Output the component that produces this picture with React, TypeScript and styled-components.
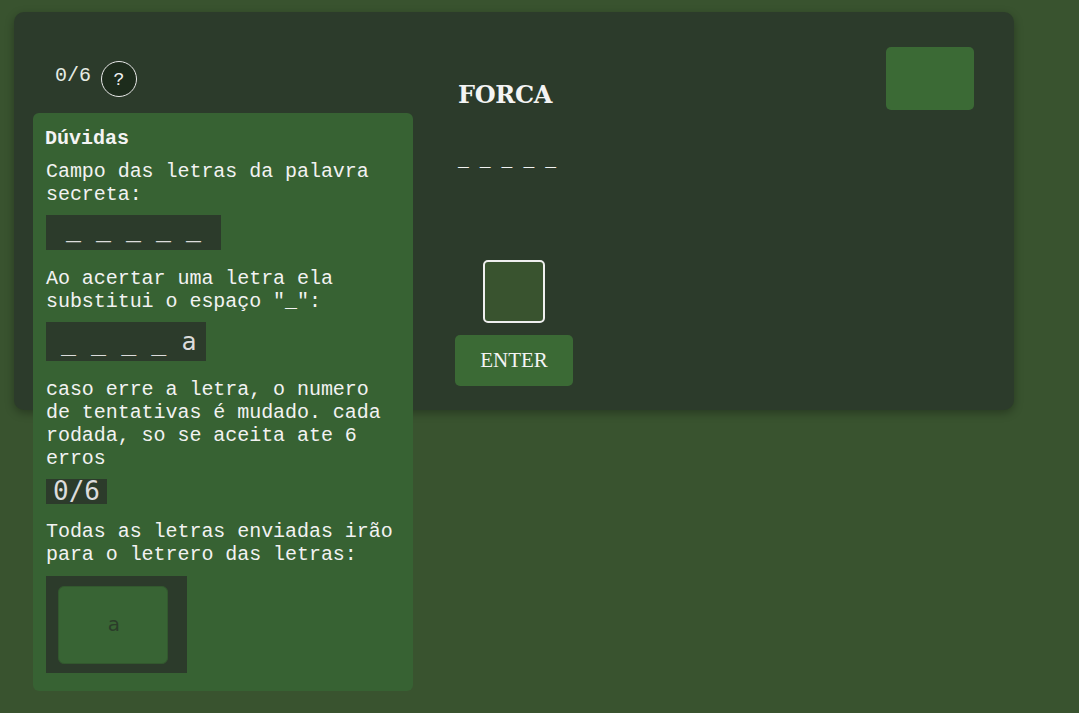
import React from "react";
import styled, { createGlobalStyle } from "styled-components";

const Global = createGlobalStyle`
  html, body { margin: 0; padding: 0; }
  body {
    background: #39532f;
    font-family: "Liberation Mono", "Courier New", monospace;
    color: #f2f2f2;
    min-height: 713px;
  }
`;

const Page = styled.div`
  padding: 12px 0 0 14px;
`;

const Card = styled.main`
  position: relative;
  width: 1000px;
  height: 398px;
  box-sizing: border-box;
  background: #2c3b2b;
  border-radius: 10px;
  box-shadow: 0 3px 10px rgba(0, 0, 0, 0.3);
  display: flex;
  padding: 35px 40px 0 41px;
`;

const LeftCol = styled.div`
  width: 400px;
  flex: none;
`;

const CounterRow = styled.div`
  display: flex;
  align-items: flex-start;
  gap: 10px;
  padding-top: 14px;
`;

const Counter = styled.span`
  font-size: 20px;
  line-height: 23px;
  color: #e6ece4;
  margin-top: 3px;
`;

const HelpButton = styled.button`
  width: 36px;
  height: 36px;
  border-radius: 50%;
  border: 1px solid #e8e8e8;
  background: #1d2c1c;
  color: #f2f2f2;
  font-family: "Liberation Mono", monospace;
  font-size: 18px;
  padding: 0;
  padding-top: 2px;
  display: flex;
  align-items: center;
  justify-content: center;
`;

const CenterCol = styled.div`
  flex: 1;
  padding-top: 31px;
  display: flex;
  flex-direction: column;
  align-items: flex-start;
`;

const Title = styled.h1`
  margin: 0 0 0 3px;
  font-family: "DejaVu Serif", "Liberation Serif", serif;
  font-weight: 700;
  font-size: 24px;
  line-height: 34px;
  letter-spacing: -0.3px;
  color: #f4f4f4;
`;

const Secret = styled.div`
  margin: 39px 0 0 3px;
  font-size: 18px;
  line-height: 20px;
  color: #f2f2f2;
  letter-spacing: 0.1px;
`;

const Form = styled.form`
  margin-top: 89px;
  width: 118px;
  display: flex;
  flex-direction: column;
  align-items: center;
  gap: 12px;
`;

const LetterInput = styled.input`
  width: 62px;
  height: 63px;
  box-sizing: border-box;
  border: 2px solid #efefef;
  border-radius: 5px;
  background: #39532f;
  outline: none;
  color: #fff;
  font-size: 24px;
  text-align: center;
`;

const EnterButton = styled.button`
  width: 118px;
  height: 51px;
  border: none;
  border-radius: 5px;
  background: #3b6a35;
  color: #f4f4f4;
  font-family: "Liberation Serif", "Times New Roman", serif;
  font-size: 21px;
  padding-top: 1px;
`;

const RightCol = styled.div`
  flex: none;
`;

const Hangman = styled.div`
  width: 88px;
  height: 63px;
  border-radius: 5px;
  background: #3b6a35;
`;

const HelpPanel = styled.aside`
  position: absolute;
  left: 19px;
  top: 101px;
  width: 380px;
  height: 578px;
  box-sizing: border-box;
  background: #376233;
  border-radius: 6px;
  padding: 12px 12px 0 12px;
  display: flex;
  flex-direction: column;
  align-items: flex-start;
  gap: 10px;
  z-index: 2;
`;

const HelpTitle = styled.h2`
  margin: 2px 0 -2px 0;
  font-size: 20px;
  line-height: 23px;
  font-weight: 700;
  color: #f4f4f4;
`;

const HelpText = styled.p<{ $extra?: number }>`
  margin: ${(p) => p.$extra ?? 0}px 0 -2px 1px;
  padding-top: 2px;
  font-size: 20px;
  line-height: 23px;
  color: #f2f2f2;
  letter-spacing: -0.05px;
`;

const Sample = styled.div<{ $h: number; $pad: string; $size: number; $sans?: boolean }>`
  margin: 1px 0 0 1px;
  height: ${(p) => p.$h}px;
  padding: ${(p) => p.$pad};
  box-sizing: border-box;
  background: #2c3b2b;
  color: #dcdcdc;
  font-family: ${(p) =>
    p.$sans ? '"DejaVu Sans Mono", monospace' : '"Liberation Mono", monospace'};
  font-size: ${(p) => p.$size}px;
  line-height: ${(p) => p.$h}px;
  white-space: pre;
`;

const Board = styled.div`
  margin: 2px 0 0 1px;
  width: 141px;
  height: 97px;
  box-sizing: border-box;
  background: #2c3b2b;
  padding: 10px 19px 9px 12px;
`;

const Tile = styled.div`
  width: 110px;
  height: 78px;
  box-sizing: border-box;
  border-radius: 6px;
  background: #386434;
  border: 1px solid #32582e;
  display: flex;
  align-items: center;
  justify-content: center;
  color: #2b3d2a;
  font-family: "DejaVu Sans", sans-serif;
  font-size: 20px;
  padding-bottom: 3px;
  padding-left: 2px;
`;

export default function App() {
  return (
    <>
      <Global />
      <Page>
        <Card>
          <LeftCol>
            <CounterRow>
              <Counter>0/6</Counter>
              <HelpButton type="button">?</HelpButton>
            </CounterRow>
          </LeftCol>
          <CenterCol>
            <Title>FORCA</Title>
            <Secret>_ _ _ _ _</Secret>
            <Form onSubmit={(e) => e.preventDefault()}>
              <LetterInput maxLength={1} />
              <EnterButton type="submit">ENTER</EnterButton>
            </Form>
          </CenterCol>
          <RightCol>
            <Hangman />
          </RightCol>
          <HelpPanel>
            <HelpTitle>Dúvidas</HelpTitle>
            <HelpText>Campo das letras da palavra secreta:</HelpText>
            <Sample $h={35} $pad="0 20px" $size={25}>
              _ _ _ _ _
            </Sample>
            <HelpText $extra={5}>
              Ao acertar uma letra ela substitui o espaço "_":
            </HelpText>
            <Sample $h={39} $pad="0 10px 0 15px" $size={25} $sans>
              _ _ _ _ a
            </Sample>
            <HelpText $extra={5}>
              caso erre a letra, o numero de tentativas é mudado. cada
              rodada, so se aceita ate 6 erros
            </HelpText>
            <Sample $h={25} $pad="0 7px" $size={26} $sans>
              0/6
            </Sample>
            <HelpText $extra={4}>
              Todas as letras enviadas irão para o letrero das letras:
            </HelpText>
            <Board>
              <Tile>a</Tile>
            </Board>
          </HelpPanel>
        </Card>
      </Page>
    </>
  );
}
